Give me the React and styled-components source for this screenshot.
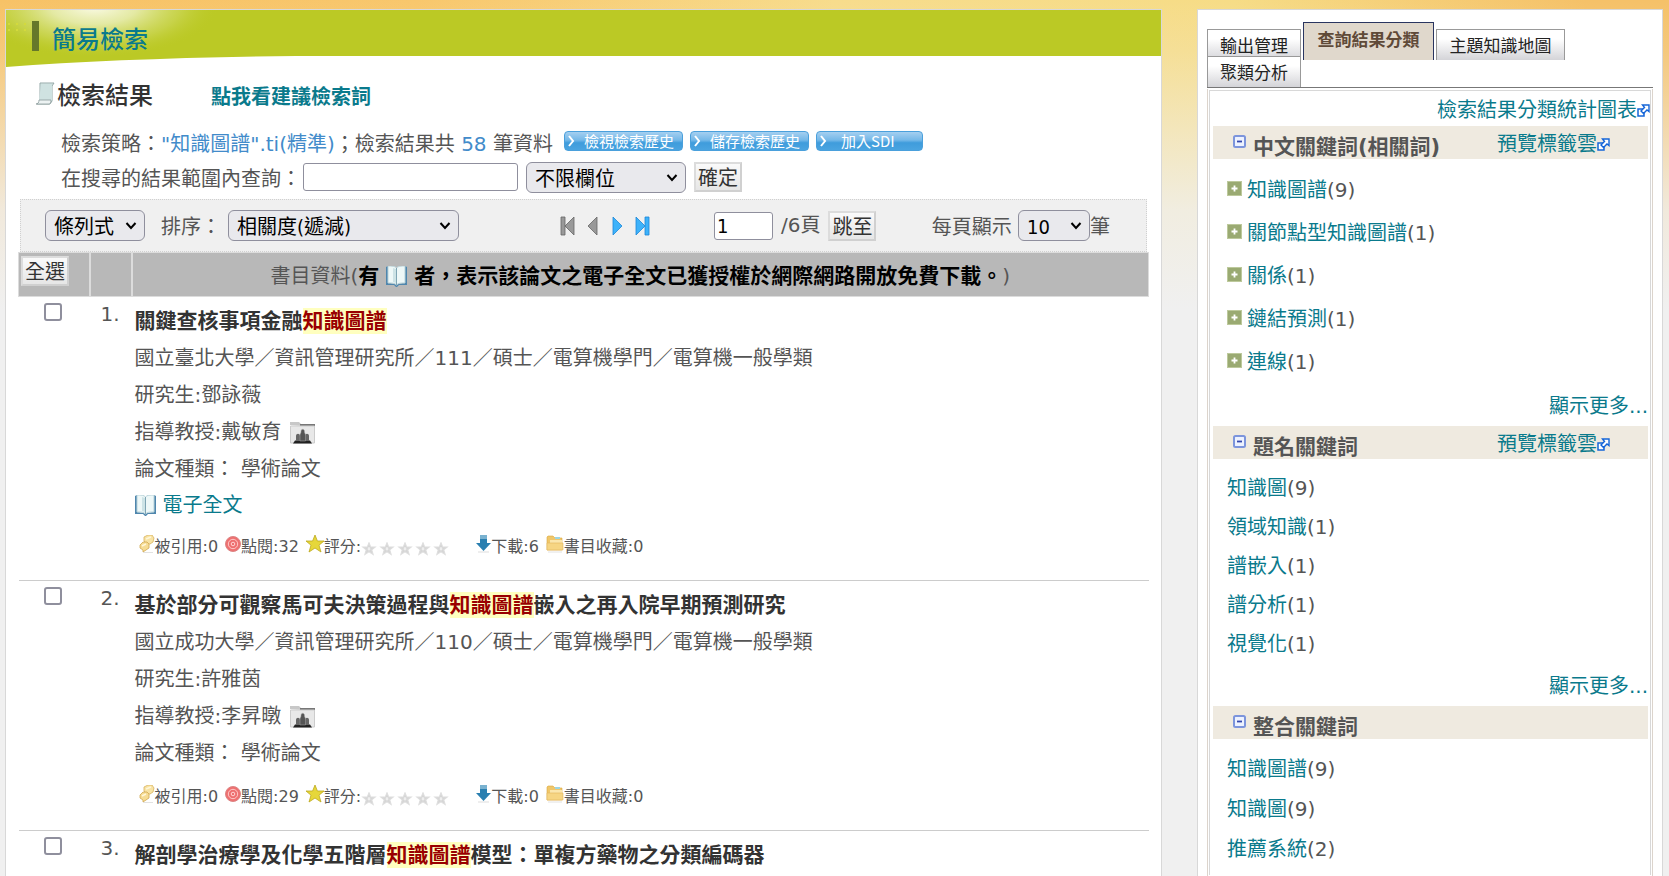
import React from "react";
import styled, { createGlobalStyle } from "styled-components";

const teal = "#0a7a8c";
const sans = `"DejaVu Sans", "Noto Sans CJK TC", sans-serif`;
const cjk = `"Noto Sans CJK TC", sans-serif`;
const control = `"DejaVu Sans Condensed", "DejaVu Sans", "Noto Sans CJK TC", sans-serif`;

const GlobalStyle = createGlobalStyle`
  * { box-sizing: border-box; }
  body {
    margin: 0;
    color: #555;
    background:
      linear-gradient(180deg, rgba(240,240,240,0) 0, rgba(240,240,240,0.15) 50px, rgba(240,240,240,0.85) 210px, #f0f0f0 310px),
      linear-gradient(90deg, #f7c266 0, #f8c76c 25%, #f7dc8c 50%, #f6dc86 74%, #f5c168 95%, #f5c168 100%);
    font: 20px/37px ${sans};
  }
  h1, h2, h3, p, ul { margin: 0; padding: 0; }
  ul { list-style: none; }
  button, input, select { font: inherit; margin: 0; }
`;

const Page = styled.div`
  display: flex;
  gap: 35px;
  min-height: 100vh;
  padding: 9px 6px 0 5px;
`;
const Panel = styled.div`
  background: #fff;
  border: 1px solid #d8d8d8;
  border-bottom: 0;
`;
const Main = styled(Panel).attrs({ as: "main" })`
  flex: 1;
  min-width: 0;
`;
const Side = styled(Panel).attrs({ as: "aside" })`
  flex: 0 0 466px;
  padding: 12px 9px 0 9px;
`;

/* header banner */
const Banner = styled.header`
  position: relative;
  display: flex;
  align-items: center;
  height: 46px;
  padding: 9px 0 0 46px;
  background: #bbc925;
`;
const BannerArt = styled.svg`
  position: absolute;
  left: 0;
  top: 0;
`;
const PageTitle = styled.h1`
  position: relative;
  font: 500 24px/36px ${cjk};
  color: ${teal};
`;

const TitleRow = styled.div`
  display: flex;
  align-items: center;
  height: 37px;
  margin: 19px 0 0 29px;
`;
const ResultTitle = styled.h2`
  font: 500 24px/37px ${cjk};
  color: #333;
  margin-left: 2px;
`;
const Link = styled.a`
  color: ${teal};
  text-decoration: none;
  white-space: nowrap;
`;
const SuggestLink = styled(Link)`
  font-weight: bold;
  margin-left: 58px;
  padding-top: 7px;
`;
const Line = styled.div`
  display: flex;
  align-items: center;
  height: ${(p) => p.$h}px;
  margin-top: ${(p) => p.$top || 0}px;
  padding-left: 55px;
  white-space: pre;
`;
const Blue = styled.span`
  color: #428bca;
`;
const ActionGroup = styled.div`
  display: flex;
  gap: 7px;
  padding: 0 0 6px 11px;
`;
const BlueButton = styled.button`
  display: flex;
  align-items: center;
  width: ${(p) => p.$w}px;
  height: 20px;
  padding: 0 3px;
  gap: ${(p) => p.$gap}px;
  border: 1px solid #4aa0dc;
  border-radius: 4px;
  background: linear-gradient(#a5cff0 0, #74b8e8 45%, #3f9cdc 60%, #4aa4e0 100%);
  color: #fff;
  font: 15px/18px ${cjk};
`;
const TextField = styled.input`
  width: ${(p) => p.$w}px;
  height: 28px;
  padding: 0 2px;
  border: 1px solid #8f8f9d;
  border-radius: 3px;
  background: #fff;
  color: #000;
  font: 20px/24px ${control};
`;
const SelectBox = styled.span`
  position: relative;
  display: block;
  width: ${(p) => p.$w}px;
  height: 31px;
  svg {
    position: absolute;
    right: 8px;
    top: 11px;
    pointer-events: none;
  }
`;
const NativeSelect = styled.select`
  appearance: none;
  display: block;
  width: 100%;
  height: 100%;
  padding: 2px 8px 0;
  border: 1px solid #8f8f9d;
  border-radius: 6px;
  background: #e9e9ed;
  color: #000;
  font: 20px/28px ${control};
`;
const GreyButton = styled.button`
  height: 30px;
  width: 48px;
  padding: 0;
  border: 2px solid #d0d0d0;
  border-top-color: #dcdcdc;
  border-left-color: #dcdcdc;
  background: linear-gradient(#fafafa, #e6e6e6);
  color: #333;
  font: 20px/24px ${cjk};
`;

const Toolbar = styled.div`
  display: flex;
  align-items: center;
  height: 53px;
  margin: 5px 14px 0 14px;
  padding: 0 36px 0 24px;
  border: 1px dotted #d0d0d0;
  background: #f0f0f0;
  white-space: pre;
`;
const Group = styled.div`
  display: flex;
  align-items: center;
  gap: ${(p) => p.$gap || 0}px;
  margin-left: ${(p) => p.$left || "0"};
`;
const Label = styled.label`
  padding-top: 4px;
`;
const PagerButton = styled.button`
  display: flex;
  padding: 0;
  border: 0;
  background: none;
`;

/* results */
const Results = styled.table`
  width: calc(100% - 24px);
  margin-left: 12px;
  border-collapse: collapse;
  table-layout: fixed;
`;
const HeadCell = styled.th`
  height: 44px;
  width: ${(p) => p.$w || "auto"};
  padding: ${(p) => p.$pad || "0"};
  border: 2px solid #dcdcdc;
  border-width: 1px 2px;
  background: #b8b8b8;
  font-weight: normal;
  vertical-align: ${(p) => p.$v || "middle"};
  line-height: 30px;
  &:first-child { border-left-width: 1px; }
  &:last-child { border-right-width: 1px; }
  > svg { vertical-align: -4px; margin: 0 7px; }
  strong { color: #000; font-size: 21px; }
  button { display: block; }
`;
const Row = styled.tr`
  border-bottom: 1px solid #ccc;
  &:last-child { border-bottom: 0; }
`;
const Cell = styled.td`
  vertical-align: top;
  text-align: ${(p) => p.$align || "left"};
  padding: ${(p) => p.$pad || "0"};
`;
const NumberCell = styled(Cell)`
  line-height: 35px;
`;
const Check = styled.input`
  appearance: none;
  display: block;
  width: 18px;
  height: 18px;
  border: 2px solid #8f8f9d;
  border-radius: 3px;
  background: #fff;
`;
const ThesisTitle = styled.h3`
  font: bold 21px/37px ${sans};
  a { color: #333; text-decoration: none; }
  mark { background: #ffffbf; color: #900; padding: 1px 0; }
`;
const Meta = styled.p`
  display: flex;
  align-items: center;
  gap: ${(p) => p.$gap || 7}px;
  height: ${(p) => p.$h || 37}px;
  white-space: nowrap;
`;
const Stats = styled.div`
  display: flex;
  align-items: center;
  gap: 7px;
  height: 20px;
  margin: 15px 0 23px 4px;
  font-size: 16px;
  line-height: 20px;
  white-space: nowrap;
`;
const Stat = styled.span`
  display: flex;
  align-items: center;
  > svg:first-child { margin-bottom: 6px; }
`;
const Stars = styled.span`
  display: flex;
  gap: 2px;
  margin-right: 19px;
  padding-top: 3px;
`;

/* sidebar */
const Tabs = styled.div`
  border-bottom: 1px solid #777;
`;
const Tab = styled.button`
  height: ${(p) => (p.$active ? 38 : 31)}px;
  width: ${(p) => p.$w}px;
  padding: 0 0 ${(p) => (p.$active ? 6 : 2)}px;
  border: 1px solid ${(p) => (p.$active ? "#2a3560" : "#999")};
  border-width: 1px 1px 0;
  background: ${(p) => (p.$active ? "#e0d8cc" : "linear-gradient(#fff 30%, #d4d4d8)")};
  color: ${(p) => (p.$active ? "#5f4a38" : "#222")};
  font: ${(p) => (p.$active ? "bold" : "normal")} 17px/27px ${cjk};
`;
const TabRow = styled.div`
  display: flex;
  align-items: flex-end;
  gap: 2px;
  height: ${(p) => p.$h}px;
`;
const SideBody = styled.div`
  margin-top: 1px;
  padding: 1px;
  border: solid #dcd4cc;
  border-width: 0 1px;
`;
const SideInner = styled.div`
  min-height: calc(100vh - 91px);
  border: 1px solid #d8d8d8;
  border-bottom: 0;
`;
const ChartLine = styled.div`
  display: flex;
  justify-content: flex-end;
  height: 35px;
`;
const IconLink = styled(Link)`
  display: flex;
  align-items: center;
  padding-top: 4px;
`;
const SectionHead = styled.div`
  display: flex;
  align-items: center;
  justify-content: space-between;
  height: 33px;
  margin: 0 2px 0 3px;
  padding: 0 38px 0 20px;
  background: #efeae0;
`;
const SectionTitle = styled.h3`
  display: flex;
  align-items: center;
  gap: 6px;
  padding-top: 9px;
  font: bold 21px/28px ${sans};
  svg { margin-bottom: 10px; }
`;
const Terms = styled.ul`
  padding: 10px 0 0 17px;
`;
const Term = styled.li`
  display: flex;
  align-items: center;
  height: ${(p) => p.$h}px;
  svg { margin: 0 5px 5px 0; }
`;
const More = styled.div`
  padding-right: 2px;
  height: 42px;
  line-height: 44px;
  text-align: right;
`;

const Scroll = () => (
  <svg width="20" height="24" viewBox="0 0 20 24">
    <path d="M5 1h14l-2 3v15l-2 3H2l3-3z" fill="#dcebea" stroke="#94a9a8" />
    <path d="M6 2h11v17H4z" fill="#cfe2e1" />
    <path d="M1 22c2 0 3-2 3-4h12c0 3-1 4-2 4z" fill="#edf3f3" stroke="#8b9a9a" strokeWidth=".8" />
  </svg>
);
const Book = () => (
  <svg width="21" height="21" viewBox="0 0 21 21">
    <path d="M0 1l2-1v17l7 1 1.500 1 1.500-1 7-1V0l2 1v18h-8l-2 2h-1l-2-2H0z" fill="#4f86ad" />
    <path d="M2 0c4 0 7 0 8.500 2C12 0 15 0 19 0v17c-4 0-7 0-8.500 2C9 17 6 17 2 17z" fill="#eef8f8" stroke="#b9d3da" />
    <path d="M10.500 2v17" stroke="#7fa5b4" />
    <path d="M7 2l3 1v14l-3-1z" fill="#cde3e6" />
  </svg>
);
const Folks = () => (
  <svg width="25" height="22" viewBox="0 0 25 22">
    <path d="M0 3V0h9l2 2h14v3z" fill="#c8c8c8" />
    <path d="M10 2h15v2H10z" fill="#777" />
    <path d="M.5 4h24v17H.5z" fill="#e8e8e8" stroke="#ccc" />
    <path d="M3 21.500l2-3h15l2 3z" fill="#222" />
    <path d="M6 19v-5c0-3 4-3 4 0v5zM15 19v-5c0-3 4-3 4 0v5z" fill="#666" />
    <path d="M10 19v-6c0-1.500 1-1.500 1-3.500 0-3 3.500-3 3.500 0 0 2 1 2 1 3.500v6z" fill="#555" stroke="#aaa" strokeWidth=".5" />
  </svg>
);
const Popup = () => (
  <svg width="13" height="13" viewBox="0 0 13 13">
    <path d="M1 5h6v7H1z" fill="#fff" stroke="#1565d8" strokeWidth="1.500" />
    <path d="M5.500 1H12v6.500L10 6 6.500 9.500 4 7l3.500-3.500z" fill="#fff" stroke="#1565d8" strokeWidth="1.400" />
  </svg>
);
const Minus = () => (
  <svg width="14" height="14" viewBox="0 0 14 14">
    <rect x="1" y="1" width="11" height="11" rx="1.500" fill="#edf2ff" stroke="#7d95dc" strokeWidth="2" />
    <path d="M4 6.500h5" stroke="#3548ad" strokeWidth="1.800" />
  </svg>
);
const Plus = () => (
  <svg width="15" height="15" viewBox="0 0 15 15">
    <rect x=".5" y=".5" width="14" height="14" fill="#9aaa72" stroke="#bdc99c" />
    <path d="M4.500 7.500h6M7.500 4.500v6" stroke="#fff" strokeWidth="1.800" />
  </svg>
);
const Arrow = ({ color, dark, flip, bar }) => (
  <svg width="17" height="20" viewBox="0 0 17 20">
    <g transform={flip ? "translate(17 0) scale(-1 1)" : undefined} fill={color} stroke={dark} strokeWidth=".8">
      <path d={bar ? "M2 1l9 9-9 9z" : "M4 1l9 9-9 9z"} />
      {bar && <path d="M11 1h4v18h-4z" />}
    </g>
  </svg>
);
const Chevron = () => (
  <svg width="12" height="10" viewBox="0 0 12 10">
    <path d="M1.500 2L6 7l4.500-5" fill="none" stroke="#000" strokeWidth="2" />
  </svg>
);
const Cited = () => (
  <svg width="16" height="18" viewBox="0 0 16 18">
    <path d="M5 2l4-2h4l2 3-1 4-3 2H8L5 6z" fill="#f8e3a4" stroke="#d9b45f" strokeWidth=".8" />
    <path d="M1 10l3-3h4l2 2v4l-3 2-3 2v-2l-3-2z" fill="#f6dc94" stroke="#d0a850" strokeWidth=".8" />
    <path d="M7 4l5-2M3 11l4-2" stroke="#fff6d8" strokeWidth="1.500" />
    <path d="M4 17.500h10" stroke="#e2e2e2" />
  </svg>
);
const Target = () => (
  <svg width="16" height="18" viewBox="0 0 16 18">
    <circle cx="8" cy="9" r="7.500" fill="#ee6f6f" stroke="#dc8585" />
    <circle cx="8" cy="9" r="4.700" fill="none" stroke="#ffc9c9" />
    <circle cx="8" cy="9" r="1.800" fill="none" stroke="#ffd4d4" />
  </svg>
);
const starPath = "M9 0l2.400 6H18l-5 4.200 2 6.800-6-4-6 4 2-6.800L0 6h6.600z";
const Star = () => (
  <svg width="18" height="18" viewBox="0 0 18 18">
    <path d={starPath} fill="#e6d73a" stroke="#bda81d" strokeWidth=".8" />
  </svg>
);
const SmallStar = () => (
  <svg width="16" height="14" viewBox="-2 -1 22 20">
    <path d={starPath} fill="#d6d6d6" stroke="#dedede" strokeWidth="1.500" />
    <path d="M9 6v5M7 9h4" stroke="#f6f6f6" strokeWidth="1.500" />
  </svg>
);
const Down = () => (
  <svg width="16" height="18" viewBox="0 0 16 18">
    <path d="M5 0h7v8h4l-7.500 8L1 8h4z" fill="#2a7fb0" />
    <path d="M5 0h7v4H5z" fill="#7ab2d0" />
    <path d="M3 17h11" stroke="#ddd" />
  </svg>
);
const Folder = () => (
  <svg width="18" height="18" viewBox="0 0 18 18">
    <path d="M1 2l1-1h5l2 2h7v12H1z" fill="#f0c76a" stroke="#dba93f" strokeWidth=".6" />
    <path d="M9 2h5v2H9z" fill="#9ed4e0" />
    <path d="M4 5h12v4H4z" fill="#fbe6ac" />
    <path d="M1 8h16v7H1z" fill="#f6d583" stroke="#e3b75a" strokeWidth=".6" />
    <path d="M2 17h14" stroke="#e2e2e2" />
  </svg>
);

const Select = ({ w, label, id, options }) => (
  <SelectBox $w={w}>
    <NativeSelect id={id} aria-label={label}>
      {options.map((o) => <option key={o}>{o}</option>)}
    </NativeSelect>
    <Chevron />
  </SelectBox>
);

const Action = ({ w, gap, children }) => (
  <BlueButton type="button" $w={w} $gap={gap}>
    <svg width="7" height="12" viewBox="0 0 7 12">
      <path d="M1 1l4 5-4 5" fill="none" stroke="#fff" strokeWidth="2" />
    </svg>
    {children}
  </BlueButton>
);

const records = [
  {
    before: "關鍵查核事項金融", after: "",
    school: "國立臺北大學／資訊管理研究所／111／碩士／電算機學門／電算機一般學類",
    student: "鄧詠薇", advisor: "戴敏育", full: true, views: 32, downloads: 6,
  },
  {
    before: "基於部分可觀察馬可夫決策過程與", after: "嵌入之再入院早期預測研究",
    school: "國立成功大學／資訊管理研究所／110／碩士／電算機學門／電算機一般學類",
    student: "許雅茵", advisor: "李昇暾", views: 29, downloads: 0,
  },
  { before: "解剖學治療學及化學五階層", after: "模型：單複方藥物之分類編碼器" },
];

const sections = [
  {
    title: "中文關鍵詞(相關詞)", cloud: true, plus: true, more: true, h: 43,
    terms: [["知識圖譜", 9], ["關節點型知識圖譜", 1], ["關係", 1], ["鏈結預測", 1], ["連線", 1]],
  },
  {
    title: "題名關鍵詞", cloud: true, more: true, h: 39,
    terms: [["知識圖", 9], ["領域知識", 1], ["譜嵌入", 1], ["譜分析", 1], ["視覺化", 1]],
  },
  {
    title: "整合關鍵詞", h: 40,
    terms: [["知識圖譜", 9], ["知識圖", 9], ["推薦系統", 2]],
  },
];

const Record = ({ r, n }) => (
  <Row>
    <Cell $pad="6px 0 0 25px"><Check type="checkbox" aria-label={`選取第 ${n} 筆`} /></Cell>
    <NumberCell $align="right" $pad="0 12px 0 0">{n}.</NumberCell>
    <Cell $pad="6px 0 0 3px">
      <ThesisTitle>
        <a href="#record">{r.before}<mark>知識圖譜</mark>{r.after}</a>
      </ThesisTitle>
      {r.school && (
        <>
          <Meta>{r.school}</Meta>
          <Meta>研究生:{r.student}</Meta>
          <Meta $gap={9}>指導教授:{r.advisor}<Folks /></Meta>
          <Meta>論文種類： 學術論文</Meta>
          {r.full && <Meta $h={34}><Book /><Link href="#fulltext">電子全文</Link></Meta>}
          <Stats>
            <Stat><Cited />被引用:0</Stat>
            <Stat><Target />點閱:{r.views}</Stat>
            <Stat>
              <Star />評分:
              <Stars>{[1, 2, 3, 4, 5].map((s) => <SmallStar key={s} />)}</Stars>
            </Stat>
            <Stat><Down />下載:{r.downloads}</Stat>
            <Stat><Folder />書目收藏:0</Stat>
          </Stats>
        </>
      )}
    </Cell>
  </Row>
);

export default function App() {
  return (
    <>
      <GlobalStyle />
      <Page>
        <Main>
          <Banner>
            <BannerArt width="290" height="58" viewBox="0 0 290 58" aria-hidden="true">
              <defs>
                <radialGradient id="glow" gradientUnits="userSpaceOnUse" cx="0" cy="0" r="1" gradientTransform="translate(88 -4) scale(125 52)">
                  <stop offset="0" stopColor="#fbfbe8" />
                  <stop offset=".35" stopColor="#ebefba" stopOpacity=".85" />
                  <stop offset=".7" stopColor="#d3dc6c" stopOpacity=".5" />
                  <stop offset="1" stopColor="#bbc925" stopOpacity="0" />
                </radialGradient>
              </defs>
              <path d="M0 0h290v46Q120 48 0 57z" fill="#bbc925" />
              <path d="M0 0h290v46H0z" fill="url(#glow)" />
              <path d="M2 14h18M2 20h18" stroke="#d3da3c" strokeWidth="2" strokeDasharray="2 6" />
              <path d="M26 11h7v30h-7z" fill="#66782a" />
            </BannerArt>
            <PageTitle>簡易檢索</PageTitle>
          </Banner>

          <TitleRow>
            <Scroll />
            <ResultTitle>檢索結果</ResultTitle>
            <SuggestLink href="#suggest">點我看建議檢索詞</SuggestLink>
          </TitleRow>

          <Line $h={32} $top={16}>
            <span>檢索策略：<Blue>"知識圖譜".ti(精準)</Blue>；檢索結果共 <Blue>58</Blue> 筆資料</span>
            <ActionGroup>
              <Action w={119} gap={9}>檢視檢索歷史</Action>
              <Action w={119} gap={9}>儲存檢索歷史</Action>
              <Action w={107} gap={14}>加入SDI</Action>
            </ActionGroup>
          </Line>
          <Line $h={34}>
            <Label htmlFor="within">在搜尋的結果範圍內查詢：</Label>
            <Group $gap={8} $left="2px">
              <TextField id="within" $w={215} />
              <Select w={160} label="欄位" options={["不限欄位"]} />
              <GreyButton type="button">確定</GreyButton>
            </Group>
          </Line>

          <Toolbar>
            <Select w={100} label="顯示方式" options={["條列式"]} />
            <Group $left="16px" $gap={7}>
              <Label htmlFor="sort">排序：</Label>
              <Select w={231} id="sort" options={["相關度(遞減)"]} />
            </Group>
            <Group $left="100px" $gap={8}>
              <PagerButton type="button" aria-label="第一頁"><Arrow flip bar color="#999" dark="#666" /></PagerButton>
              <PagerButton type="button" aria-label="上一頁"><Arrow flip color="#999" dark="#666" /></PagerButton>
              <PagerButton type="button" aria-label="下一頁"><Arrow color="#3db2fa" dark="#1c86d8" /></PagerButton>
              <PagerButton type="button" aria-label="最末頁"><Arrow bar color="#3db2fa" dark="#1c86d8" /></PagerButton>
            </Group>
            <Group $left="63px" $gap={8}>
              <TextField id="page" $w={59} defaultValue="1" />
              <label htmlFor="page">/6頁</label>
              <GreyButton type="button">跳至</GreyButton>
            </Group>
            <Group $left="auto">
              <Label htmlFor="size">每頁顯示 </Label>
              <Select w={72} id="size" options={["10"]} />
              <Label htmlFor="size">筆</Label>
            </Group>
          </Toolbar>

          <Results>
            <thead>
              <tr>
                <HeadCell $w="71px" $v="top" $pad="3px 0 0 2px"><GreyButton type="button">全選</GreyButton></HeadCell>
                <HeadCell $w="42px" aria-label="序號" />
                <HeadCell $pad="3px 0 0">
                  書目資料(<strong>有</strong><Book /><strong>者，表示該論文之電子全文已獲授權於網際網路開放免費下載。</strong>)
                </HeadCell>
              </tr>
            </thead>
            <tbody>
              {records.map((r, i) => <Record key={r.before} r={r} n={i + 1} />)}
            </tbody>
          </Results>
        </Main>

        <Side>
          <Tabs>
            <TabRow $h={38}>
              <Tab type="button" $w={94}>輸出管理</Tab>
              <Tab type="button" $w={131} $active>查詢結果分類</Tab>
              <Tab type="button" $w={129}>主題知識地圖</Tab>
            </TabRow>
            <TabRow $h={27}>
              <Tab type="button" $w={94}>聚類分析</Tab>
            </TabRow>
          </Tabs>
          <SideBody>
            <SideInner>
              <ChartLine>
                <IconLink href="#chart">檢索結果分類統計圖表<Popup /></IconLink>
              </ChartLine>
              {sections.map((s) => (
                <section key={s.title}>
                  <SectionHead>
                    <SectionTitle><Minus />{s.title}</SectionTitle>
                    {s.cloud && <IconLink href="#cloud">預覽標籤雲<Popup /></IconLink>}
                  </SectionHead>
                  <Terms>
                    {s.terms.map(([name, count]) => (
                      <Term key={name} $h={s.h}>
                        {s.plus && <Plus />}
                        <Link href="#term">{name}</Link>({count})
                      </Term>
                    ))}
                  </Terms>
                  {s.more && <More><Link href="#more">顯示更多...</Link></More>}
                </section>
              ))}
            </SideInner>
          </SideBody>
        </Side>
      </Page>
    </>
  );
}
